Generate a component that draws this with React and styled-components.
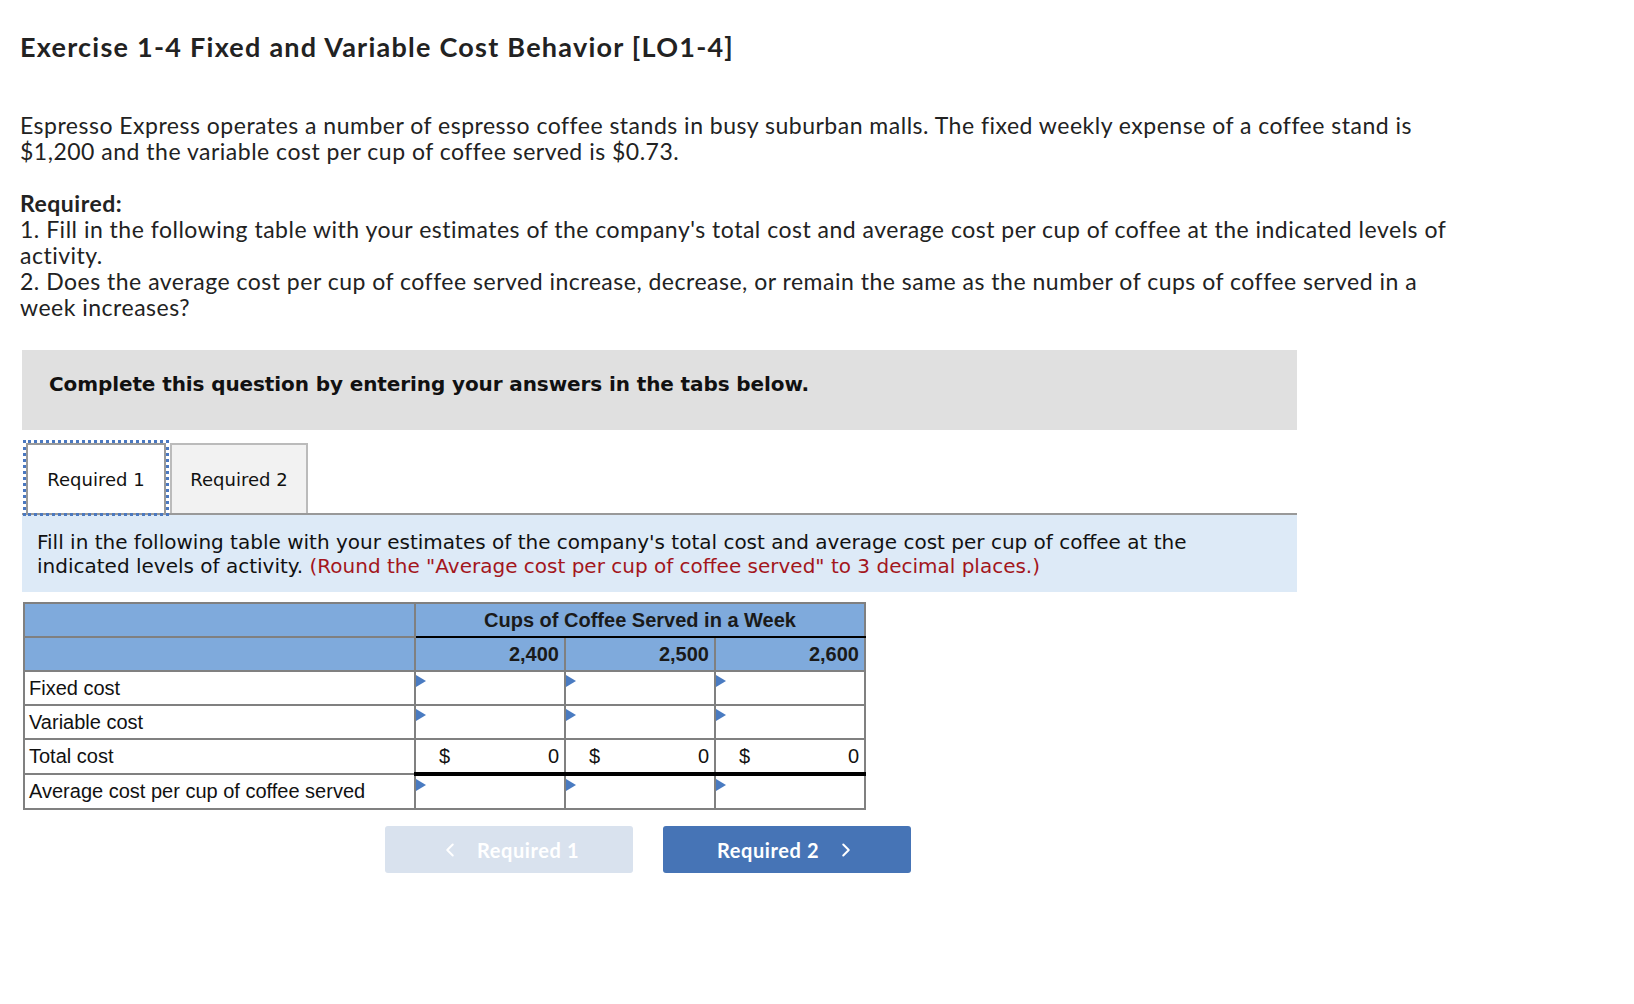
import React from 'react';
import styled, { createGlobalStyle } from 'styled-components';
import { ChevronLeft, ChevronRight } from 'lucide-react';

const GlobalStyle = createGlobalStyle`
    body {
        margin: 0;
        background: #fff;
        color: #222;
    }
`;

const Page = styled.div`
    padding: 31px 20px 40px 20px;
`;

const Title = styled.h1`
    margin: 0;
    font-family: Lato, "Liberation Sans", sans-serif;
    font-weight: 700;
    font-size: 27px;
    letter-spacing: 1.25px;
    line-height: 32px;
    color: #222;
`;

const Para = styled.p`
    margin: ${(p) => p.top || 0}px 0 0 0;
    font-family: Lato, "Liberation Sans", sans-serif;
    font-size: 23px;
    letter-spacing: 0.5px;
    line-height: 26px;
    color: #222;
    max-width: 1440px;
`;

const Strong = styled.span`
    font-weight: 700;
`;

const Answer = styled.div`
    margin: 30px 0 0 2px;
    width: 1275px;
`;

const Banner = styled.div`
    background: #e0e0e0;
    height: 80px;
    box-sizing: border-box;
    padding: 22px 27px;
    font-family: "DejaVu Sans", Verdana, sans-serif;
    font-weight: 700;
    font-size: 20px;
    letter-spacing: -0.1px;
    line-height: 24px;
    color: #111;
`;

const TabBar = styled.div`
    display: flex;
    align-items: flex-end;
    margin-top: 13px;
    border-bottom: 2px solid #999;
    padding-left: 4px;
    gap: 4px;
`;

const Tab = styled.div`
    box-sizing: border-box;
    height: 70px;
    width: ${(p) => p.w}px;
    display: flex;
    align-items: center;
    justify-content: center;
    border: 2px solid ${(p) => (p.active ? '#999' : '#bbb')};
    border-bottom: none;
    background: ${(p) => (p.active ? '#fff' : '#f2f2f2')};
    outline: ${(p) => (p.active ? '3px dotted #4a78c0' : 'none')};
    outline-offset: 0px;
    font-family: "DejaVu Sans", Verdana, sans-serif;
    font-size: 18px;
    color: #111;
`;

const Instructions = styled.div`
    background: #ddeaf7;
    padding: 15px 15px 14px 15px;
    font-family: "DejaVu Sans", Verdana, sans-serif;
    font-size: 20px;
    line-height: 24px;
    color: #111;
`;

const Hint = styled.span`
    color: #a3161c;
`;

const Table = styled.table`
    margin-top: 10px;
    margin-left: 1px;
    border-collapse: collapse;
    font-family: "Liberation Sans", Arial, sans-serif;
    font-size: 20px;
    color: #111;
`;

const HeadCell = styled.th`
    background: #7faadc;
    border: 2px solid #808080;
    border-bottom: ${(p) => (p.dark ? '2px solid #000' : '2px solid #808080')};
    height: 32px;
    padding: 0 5px;
    font-weight: 700;
    text-align: ${(p) => p.align || 'center'};
    color: #1a1a1a;
`;

const LabelCell = styled.td`
    width: 381px;
    height: 32px;
    padding: 0 4px;
    border: 2px solid #808080;
    text-align: left;
    vertical-align: middle;
`;

const ValueCell = styled.td`
    position: relative;
    width: 138px;
    height: 32px;
    padding: 0 5px;
    border: 2px solid #808080;
    border-top: ${(p) => (p.total ? '2px solid #000' : '2px solid #808080')};
    border-bottom: ${(p) => (p.total ? '4px solid #000' : '2px solid #808080')};
`;

const Marker = styled.span`
    position: absolute;
    left: 0;
    top: 3px;
    width: 0;
    height: 0;
    border-top: 6px solid transparent;
    border-bottom: 6px solid transparent;
    border-left: 10px solid #4a7bc1;
`;

const TotalInner = styled.div`
    display: flex;
    justify-content: space-between;
    padding-left: 18px;
`;

const NavRow = styled.div`
    display: flex;
    gap: 30px;
    margin-top: 16px;
    padding-left: 363px;
`;

const NavButton = styled.button`
    width: 248px;
    height: 47px;
    border: none;
    border-radius: 3px;
    background: ${(p) => (p.disabled ? '#d9e2ee' : '#4674b6')};
    color: #fff;
    display: flex;
    align-items: center;
    justify-content: center;
    gap: 16px;
    font-family: Lato, "Liberation Sans", sans-serif;
    font-weight: 700;
    font-size: 20px;
    letter-spacing: 0.6px;
    padding: 0;
`;

const rows = [
    { label: 'Fixed cost' },
    { label: 'Variable cost' },
    { label: 'Total cost', total: true },
    { label: 'Average cost per cup of coffee served' },
];

const levels = ['2,400', '2,500', '2,600'];

const App = () => {
    return (
        <Page>
            <GlobalStyle />
            <Title>Exercise 1-4 Fixed and Variable Cost Behavior [LO1-4]</Title>
            <Para top={49}>
                Espresso Express operates a number of espresso coffee stands in busy suburban malls. The fixed weekly expense of a coffee stand is $1,200 and the variable cost per cup of coffee served is $0.73.
            </Para>
            <Para top={26}>
                <Strong>Required:</Strong>
                <br />
                1. Fill in the following table with your estimates of the company's total cost and average cost per cup of coffee at the indicated levels of activity.
                <br />
                2. Does the average cost per cup of coffee served increase, decrease, or remain the same as the number of cups of coffee served in a week increases?
            </Para>

            <Answer>
                <Banner>Complete this question by entering your answers in the tabs below.</Banner>
                <TabBar>
                    <Tab active w={140}>Required 1</Tab>
                    <Tab w={138}>Required 2</Tab>
                </TabBar>
                <Instructions>
                    Fill in the following table with your estimates of the company's total cost and average cost per cup of coffee at the indicated levels of activity.{' '}
                    <Hint>(Round the "Average cost per cup of coffee served" to 3 decimal places.)</Hint>
                </Instructions>

                <Table>
                    <thead>
                        <tr>
                            <HeadCell />
                            <HeadCell colSpan={3} dark>Cups of Coffee Served in a Week</HeadCell>
                        </tr>
                        <tr>
                            <HeadCell />
                            {levels.map((l) => (
                                <HeadCell key={l} align="right">{l}</HeadCell>
                            ))}
                        </tr>
                    </thead>
                    <tbody>
                        {rows.map((r) => (
                            <tr key={r.label}>
                                <LabelCell>{r.label}</LabelCell>
                                {levels.map((l) =>
                                    r.total ? (
                                        <ValueCell key={l} total>
                                            <TotalInner>
                                                <span>$</span>
                                                <span>0</span>
                                            </TotalInner>
                                        </ValueCell>
                                    ) : (
                                        <ValueCell key={l}>
                                            <Marker />
                                        </ValueCell>
                                    )
                                )}
                            </tr>
                        ))}
                    </tbody>
                </Table>

                <NavRow>
                    <NavButton disabled>
                        <ChevronLeft size={22} strokeWidth={2.2} />
                        Required 1
                    </NavButton>
                    <NavButton>
                        Required 2
                        <ChevronRight size={22} strokeWidth={2.2} />
                    </NavButton>
                </NavRow>
            </Answer>
        </Page>
    );
};

export default App;
